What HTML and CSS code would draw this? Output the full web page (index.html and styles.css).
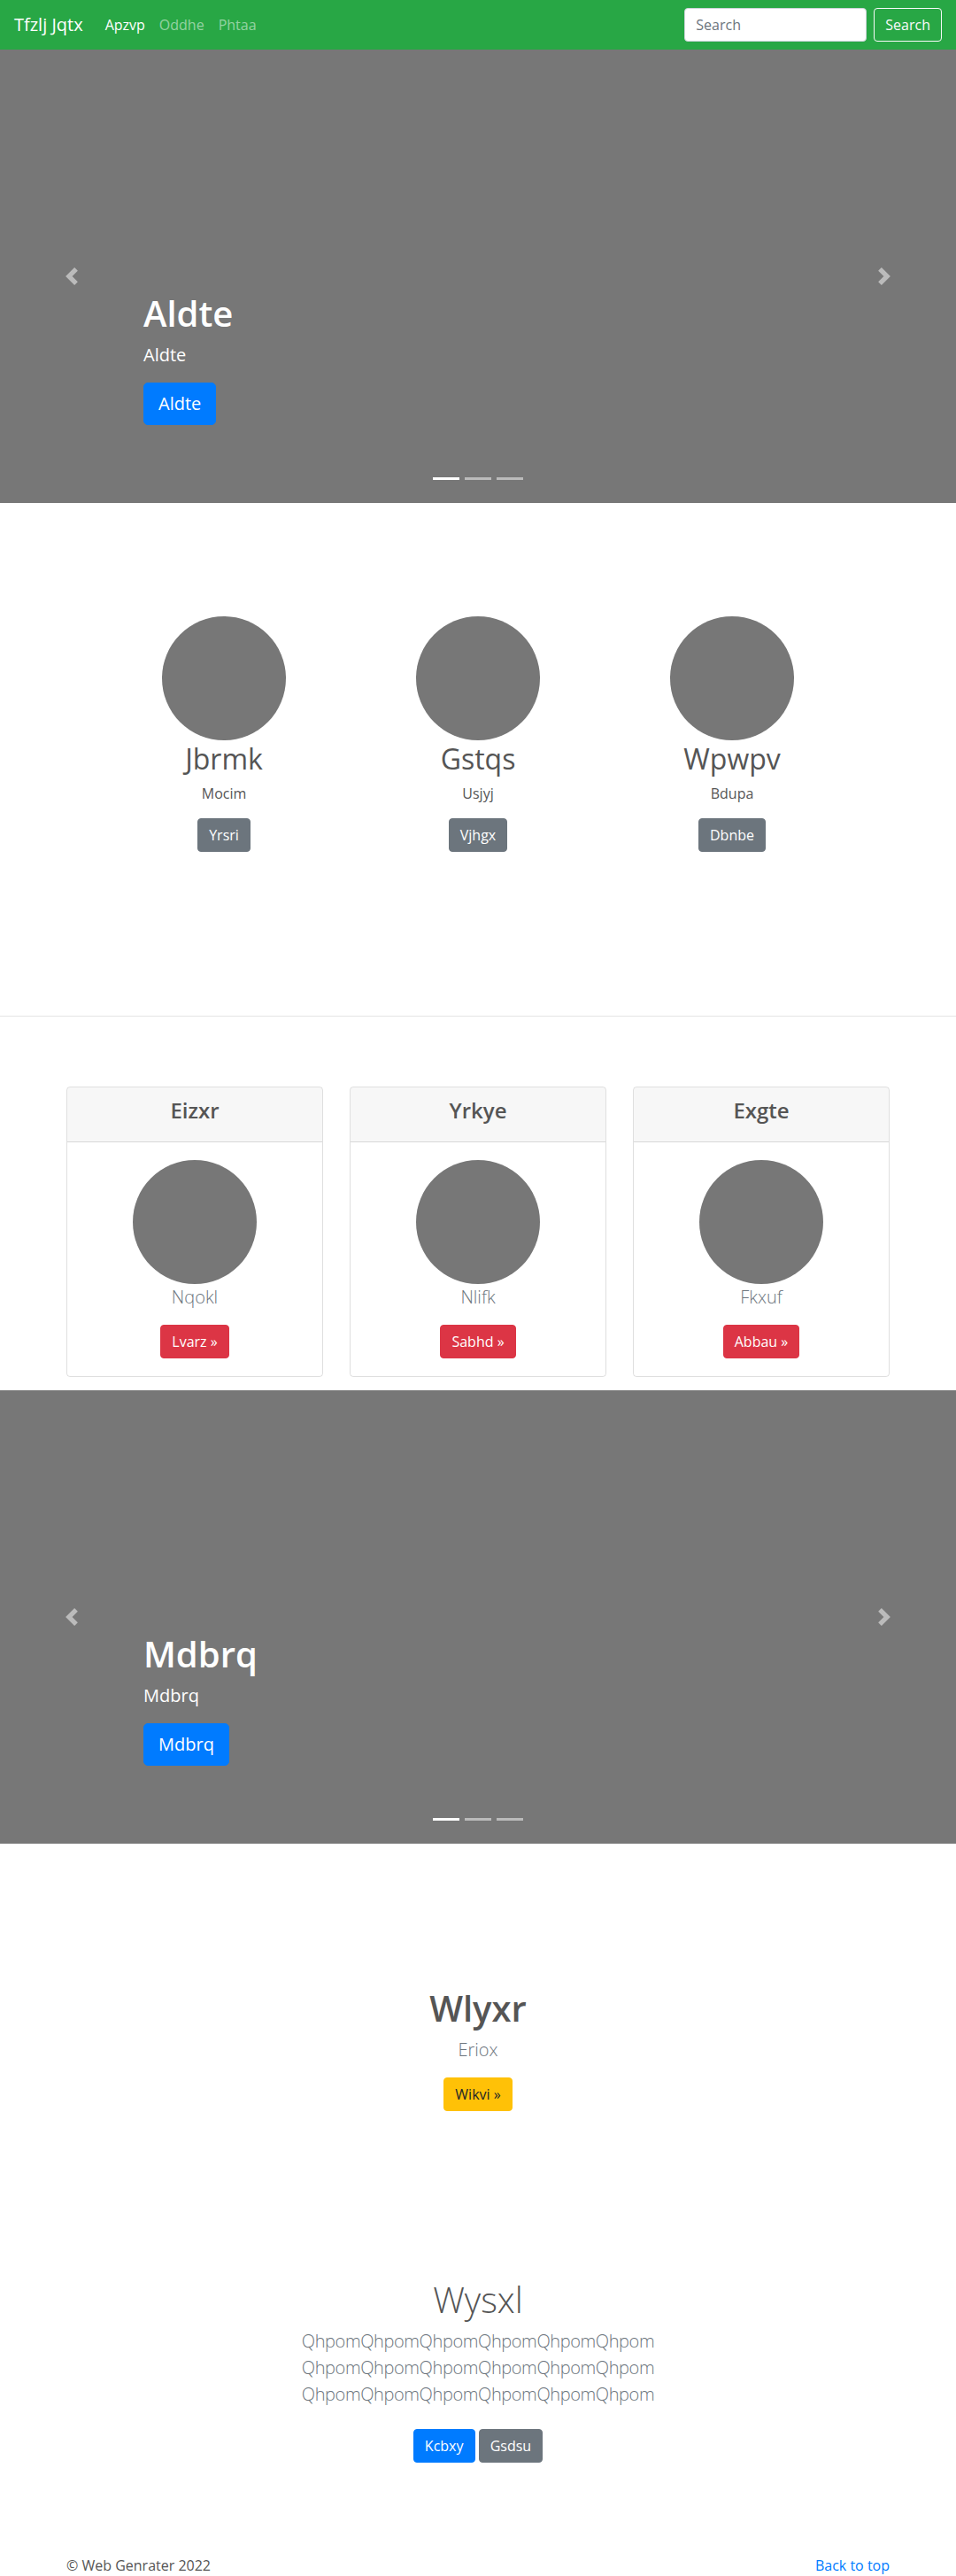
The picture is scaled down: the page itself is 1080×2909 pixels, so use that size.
FILE: index.html
```html
<!DOCTYPE html>
<html lang="en">
<head>
<meta charset="utf-8">
<title>Tfzlj Jqtx</title>
<link rel="stylesheet" href="styles.css">
</head>
<body>
<nav class="navbar">
  <a class="brand" href="#">Tfzlj Jqtx</a>
  <ul class="nav">
    <li><a class="nav-link active" href="#">Apzvp</a></li>
    <li><a class="nav-link" href="#">Oddhe</a></li>
    <li><a class="nav-link" href="#">Phtaa</a></li>
  </ul>
  <form class="search">
    <input class="search-input" type="text" placeholder="Search">
    <button class="btn btn-outline-light" type="button">Search</button>
  </form>
</nav>

<div class="carousel">
  <ol class="indicators">
    <li class="active"></li>
    <li></li>
    <li></li>
  </ol>
  <div class="caption">
    <h1 class="caption-title">Aldte</h1>
    <p class="caption-text">Aldte</p>
    <p class="caption-action"><a class="btn btn-lg btn-primary" href="#">Aldte</a></p>
  </div>
  <a class="control control-prev" href="#"><svg width="20" height="20" viewBox="0 0 8 8"><path fill="#fff" d="M5.25 0l-4 4 4 4 1.5-1.5L4.25 4l2.5-2.5L5.25 0z"/></svg></a>
  <a class="control control-next" href="#"><svg width="20" height="20" viewBox="0 0 8 8"><path fill="#fff" d="M2.75 0l-1.5 1.5L3.75 4l-2.5 2.5L2.75 8l4-4-4-4z"/></svg></a>
</div>

<section class="marketing">
  <div class="marketing-row">
    <div class="marketing-col">
      <div class="circle"></div>
      <h2 class="marketing-title">Jbrmk</h2>
      <p class="marketing-text">Mocim</p>
      <p class="marketing-action"><a class="btn btn-secondary" href="#">Yrsri</a></p>
    </div>
    <div class="marketing-col">
      <div class="circle"></div>
      <h2 class="marketing-title">Gstqs</h2>
      <p class="marketing-text">Usjyj</p>
      <p class="marketing-action"><a class="btn btn-secondary" href="#">Vjhgx</a></p>
    </div>
    <div class="marketing-col">
      <div class="circle"></div>
      <h2 class="marketing-title">Wpwpv</h2>
      <p class="marketing-text">Bdupa</p>
      <p class="marketing-action"><a class="btn btn-secondary" href="#">Dbnbe</a></p>
    </div>
  </div>
</section>

<hr class="divider">

<section class="pricing">
  <div class="container">
    <div class="card-deck">
      <div class="card">
        <div class="card-header"><h4 class="card-title">Eizxr</h4></div>
        <div class="card-body">
          <div class="circle"></div>
          <p class="lead muted card-text">Nqokl</p>
          <a class="btn btn-danger" href="#">Lvarz &raquo;</a>
        </div>
      </div>
      <div class="card">
        <div class="card-header"><h4 class="card-title">Yrkye</h4></div>
        <div class="card-body">
          <div class="circle"></div>
          <p class="lead muted card-text">Nlifk</p>
          <a class="btn btn-danger" href="#">Sabhd &raquo;</a>
        </div>
      </div>
      <div class="card">
        <div class="card-header"><h4 class="card-title">Exgte</h4></div>
        <div class="card-body">
          <div class="circle"></div>
          <p class="lead muted card-text">Fkxuf</p>
          <a class="btn btn-danger" href="#">Abbau &raquo;</a>
        </div>
      </div>
    </div>
  </div>
</section>

<div class="carousel">
  <ol class="indicators">
    <li class="active"></li>
    <li></li>
    <li></li>
  </ol>
  <div class="caption">
    <h1 class="caption-title">Mdbrq</h1>
    <p class="caption-text">Mdbrq</p>
    <p class="caption-action"><a class="btn btn-lg btn-primary" href="#">Mdbrq</a></p>
  </div>
  <a class="control control-prev" href="#"><svg width="20" height="20" viewBox="0 0 8 8"><path fill="#fff" d="M5.25 0l-4 4 4 4 1.5-1.5L4.25 4l2.5-2.5L5.25 0z"/></svg></a>
  <a class="control control-next" href="#"><svg width="20" height="20" viewBox="0 0 8 8"><path fill="#fff" d="M2.75 0l-1.5 1.5L3.75 4l-2.5 2.5L2.75 8l4-4-4-4z"/></svg></a>
</div>

<section class="feature">
  <h1 class="feature-title">Wlyxr</h1>
  <p class="lead muted feature-text">Eriox</p>
  <p class="feature-action"><a class="btn btn-warning" href="#">Wikvi &raquo;</a></p>
</section>

<section class="jumbotron">
  <div class="jumbo-container">
    <h1 class="jumbo-title">Wysxl</h1>
    <p class="lead muted jumbo-text">QhpomQhpomQhpomQhpomQhpomQhpom QhpomQhpomQhpomQhpomQhpomQhpom QhpomQhpomQhpomQhpomQhpomQhpom</p>
    <p class="jumbo-actions"><a class="btn btn-primary jumbo-btn" href="#">Kcbxy</a> <a class="btn btn-secondary jumbo-btn" href="#">Gsdsu</a></p>
  </div>
</section>

<footer class="footer">
  <p class="footer-copy">&copy; Web Genrater 2022</p>
  <p class="footer-top"><a href="#">Back to top</a></p>
</footer>
</body>
</html>
```

FILE: styles.css
```css
* { box-sizing: border-box; }

body {
  margin: 0;
  font-family: "Open Sans", "Noto Sans", "Liberation Sans", sans-serif;
  font-size: 16px;
  line-height: 1.5;
  color: #555;
  background: #fff;
}

a { color: #007bff; text-decoration: none; }

/* Buttons */
.btn {
  display: inline-block;
  font-size: 16px;
  line-height: 1.5;
  padding: 6px 12px;
  border: 1px solid transparent;
  border-radius: 4px;
  font-weight: 400;
  text-align: center;
  vertical-align: middle;
  font-family: inherit;
}
.btn-lg { font-size: 20px; padding: 8px 16px; border-radius: 5px; }
.btn-primary { background: #007bff; border-color: #007bff; color: #fff; }
.btn-secondary { background: #6c757d; border-color: #6c757d; color: #fff; }
.btn-danger { background: #dc3545; border-color: #dc3545; color: #fff; }
.btn-warning { background: #ffc107; border-color: #ffc107; color: #212529; }
.btn-outline-light { background: transparent; border-color: #f8f9fa; color: #f8f9fa; }

.lead { font-size: 20px; font-weight: 300; line-height: 30px; }
.muted { color: #6c757d; }

/* Navbar */
.navbar {
  display: flex;
  align-items: center;
  height: 56px;
  padding: 8px 16px;
  background: #28a745;
}
.brand {
  color: #fff;
  font-size: 20px;
  line-height: 30px;
  padding: 5px 0;
  margin-right: 17px;
  white-space: nowrap;
}
.nav {
  display: flex;
  list-style: none;
  margin: 0;
  padding: 0;
}
.nav-link {
  display: block;
  padding: 8px;
  color: rgba(255, 255, 255, 0.5);
}
.nav-link.active { color: #fff; }
.search {
  margin: 0 0 0 auto;
  display: flex;
  align-items: center;
  gap: 8px;
}
.search-input {
  width: 206px;
  height: 38px;
  padding: 6px 12px;
  font-family: inherit;
  font-size: 16px;
  color: #495057;
  background: #fff;
  border: 1px solid #ced4da;
  border-radius: 4px;
}
.search-input::placeholder { color: #6c757d; }

/* Carousel */
.carousel {
  position: relative;
  height: 512px;
  background: #777;
  overflow: hidden;
}
.indicators {
  position: absolute;
  left: 0;
  right: 0;
  bottom: 0;
  margin: 0 0 16px;
  padding: 0;
  list-style: none;
  display: flex;
  justify-content: center;
  z-index: 2;
}
.indicators li {
  width: 30px;
  height: 3px;
  margin: 10px 3px;
  background: #fff;
  opacity: 0.5;
}
.indicators li.active { opacity: 1; }
.caption {
  position: absolute;
  left: 15%;
  right: 15%;
  bottom: 52px;
  padding: 20px 0;
  color: #fff;
  text-align: left;
  z-index: 3;
}
.caption-title {
  margin: 0 0 8px;
  font-size: 40px;
  font-weight: 600;
  line-height: 1.2;
}
.caption-text {
  margin: 0 0 16px;
  font-size: 20px;
  line-height: 30px;
}
.caption-action { margin: 0 0 16px; }
.control {
  position: absolute;
  top: 0;
  bottom: 0;
  width: 15%;
  display: flex;
  align-items: center;
  justify-content: center;
  opacity: 0.5;
  z-index: 1;
}
.control svg { display: block; }
.control-prev { left: 0; }
.control-next { right: 0; }

/* Marketing */
.marketing { padding: 128px 0 169px; }
.marketing-row {
  width: 861px;
  margin: 0 auto;
  display: grid;
  grid-template-columns: repeat(3, 1fr);
}
.marketing-col { text-align: center; }
.circle {
  width: 140px;
  height: 140px;
  border-radius: 50%;
  background: #777;
  margin: 0 auto;
}
.marketing-title {
  margin: 2px 0 8px;
  font-size: 32px;
  font-weight: 400;
  line-height: 1.2;
}
.marketing-text { margin: 0 0 16px; }
.marketing-action { margin: 0 0 16px; }

.divider {
  margin: 0;
  border: 0;
  border-top: 1px solid rgba(0, 0, 0, 0.1);
}

/* Pricing cards */
.pricing { padding: 79px 0 15px; }
.container {
  width: 960px;
  margin: 0 auto;
  padding: 0 15px;
}
.card-deck {
  display: flex;
  gap: 30px;
}
.card {
  flex: 1;
  border: 1px solid rgba(0, 0, 0, 0.125);
  border-radius: 4px;
  overflow: hidden;
}
.card-header {
  padding: 12px 20px;
  background: rgba(0, 0, 0, 0.03);
  border-bottom: 1px solid rgba(0, 0, 0, 0.125);
  text-align: center;
}
.card-title {
  margin: 0 0 8px;
  font-size: 24px;
  font-weight: 600;
  line-height: 1.2;
}
.card-body {
  padding: 20px;
  text-align: center;
}
.card-text { margin: 0 0 16px; }

/* Feature */
.feature {
  padding: 162px 0 125px;
  text-align: center;
}
.feature-title {
  margin: 0 0 8px;
  font-size: 40px;
  font-weight: 600;
  line-height: 1.2;
}
.feature-text { margin: 0 0 16px; }
.feature-action { margin: 0 0 16px; }

/* Jumbotron */
.jumbotron {
  padding: 48px 0;
  text-align: center;
}
.jumbo-container {
  max-width: 640px;
  margin: 0 auto;
  padding: 0 15px;
}
.jumbo-title {
  margin: 0 0 8px;
  font-size: 40px;
  font-weight: 300;
  line-height: 1.2;
}
.jumbo-text { margin: 0 0 16px; letter-spacing: -0.4px; }
.jumbo-actions { margin: 0; }
.jumbo-btn { margin: 8px 0; }

/* Footer */
.footer {
  width: 960px;
  margin: 0 auto;
  padding: 48px 15px 0;
  display: flex;
  justify-content: space-between;
}
.footer-copy, .footer-top { margin: 0; }
```
